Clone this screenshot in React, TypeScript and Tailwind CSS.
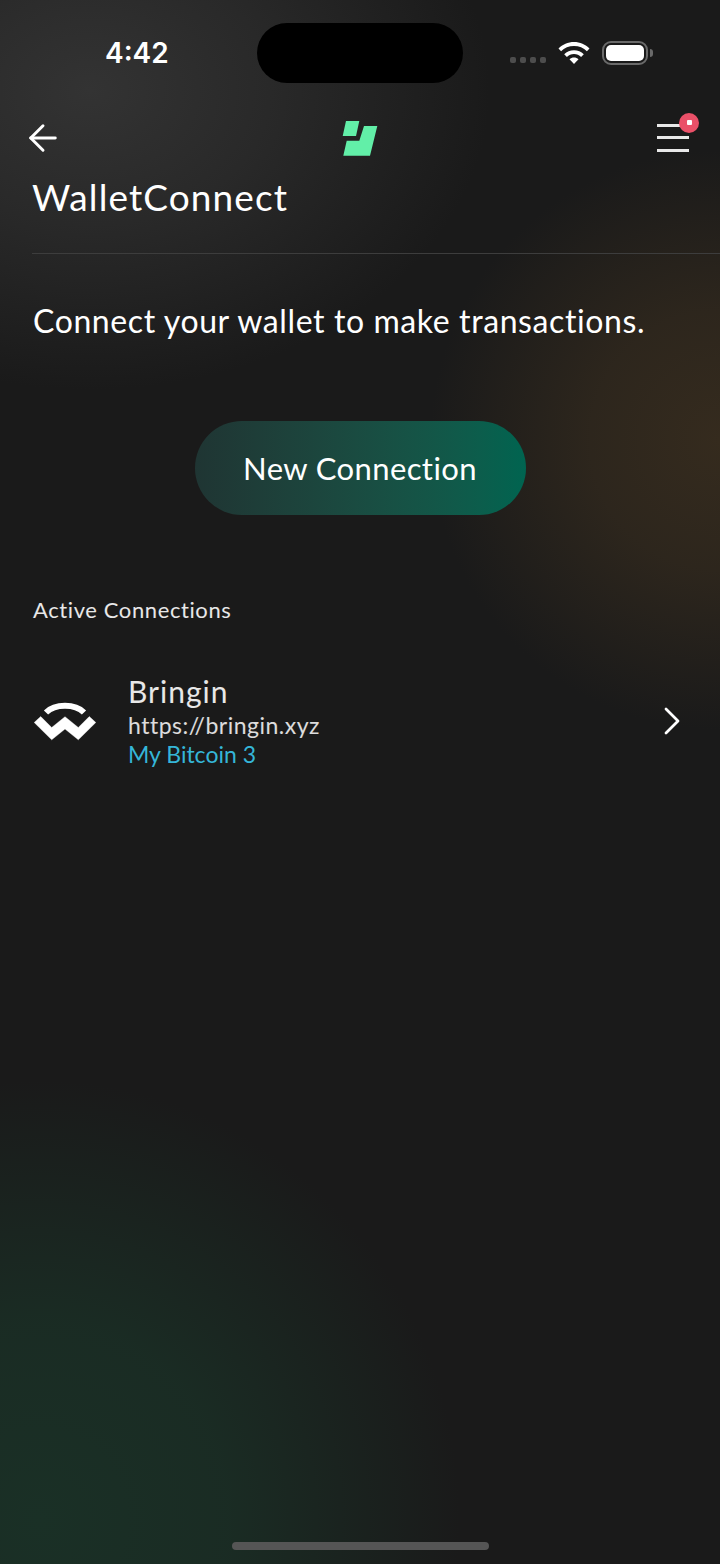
import { ArrowLeft, ChevronRight } from 'lucide-react';

const pageBg =
  'bg-[radial-gradient(ellipse_420px_440px_at_40px_1520px,#1a3026_0%,rgba(26,48,38,0.8)_45%,rgba(26,26,26,0)_100%),radial-gradient(ellipse_290px_290px_at_720px_440px,#352b1e_0%,rgba(53,43,30,0.7)_45%,rgba(26,26,26,0)_100%),radial-gradient(ellipse_400px_300px_at_90px_90px,#333333_0%,rgba(51,51,51,0.6)_45%,rgba(26,26,26,0)_100%)]';

function WifiIcon() {
  return (
    <svg width="32" height="24" viewBox="0 0 32 24" fill="white">
      <path d="M0.5 7.500C4.500 3.400 10 1 16 1s11.500 2.400 15.500 6.500l-2.600 2.700C25.600 6.900 21 5 16 5S6.400 6.900 3.100 10.200z" />
      <path d="M6.200 13.200C8.800 10.700 12.200 9.200 16 9.200s7.200 1.500 9.800 4l-2.700 2.700C21.300 14.100 18.800 13 16 13s-5.300 1.100-7.100 2.900z" />
      <path d="M11.500 18.300C12.700 17.200 14.300 16.600 16 16.600s3.300 0.600 4.500 1.700L16 23z" />
    </svg>
  );
}

function Battery() {
  return (
    <div className="flex items-center gap-[2px]">
      <div className="w-[46px] h-[24px] rounded-[9px] border-[2px] border-[#6a6a6a] p-[2px]">
        <div className="w-full h-full rounded-[5px] bg-white" />
      </div>
      <div className="w-[3px] h-[8px] rounded-r-full bg-[#6a6a6a]" />
    </div>
  );
}

function Logo() {
  return (
    <svg width="36" height="36" viewBox="0 0 36 36" fill="#62efa8">
      <polygon points="4,1 17.300,1 14,16 0.700,16" />
      <polygon points="22,6 35.300,6 28,35.700 1.300,35.700 4.700,20.700 17.300,20.700" />
    </svg>
  );
}

function WcIcon() {
  return (
    <svg width="64" height="40" viewBox="0 0 64 40">
      <path d="M13 11.500C22 2.500 42 2.500 51 11.500" fill="none" stroke="white" strokeWidth="6" />
      <polygon
        points="1.200,21.500 7.700,15.500 18.700,26.500 32,15.700 45.300,26.500 56.300,15.500 62.800,21.500 45.300,38.800 32,28 18.700,38.800"
        fill="white"
        stroke="white"
        strokeWidth="0.4"
        strokeLinejoin="round"
      />
    </svg>
  );
}

export default function App() {
  return (
    <div
      className={`relative w-[720px] h-[1564px] overflow-hidden bg-[#1a1a1a] text-white font-['Lato',sans-serif] ${pageBg}`}
    >
      {/* notch */}
      <div className="absolute left-[257px] top-[23px] w-[206px] h-[60px] rounded-[30px] bg-black" />

      <div className="flex items-center justify-between h-[105px] pl-[105px] pr-[67px]">
        <span className="text-[28px] font-semibold font-['Inter',sans-serif] leading-none">4:42</span>
        <div className="flex items-center">
          <div className="flex gap-[4px] mr-[12px] mt-[14px]">
            <span className="w-[6px] h-[6px] rounded-[2px] bg-[#4d4d4d]" />
            <span className="w-[6px] h-[6px] rounded-[2px] bg-[#4d4d4d]" />
            <span className="w-[6px] h-[6px] rounded-[2px] bg-[#4d4d4d]" />
            <span className="w-[6px] h-[6px] rounded-[2px] bg-[#4d4d4d]" />
          </div>
          <WifiIcon />
          <div className="ml-[12px]">
            <Battery />
          </div>
        </div>
      </div>

      <div className="flex items-center h-[65px] px-[22px]">
        <div className="flex-1">
          <ArrowLeft size={42} strokeWidth={1.7} />
        </div>
        <Logo />
        <div className="flex-1 flex justify-end">
          <div className="relative mr-[9px] w-[32px] h-[28px] flex flex-col justify-between">
            <span className="h-[3px] bg-white/90" />
            <span className="h-[3px] bg-white/90" />
            <span className="h-[3px] bg-white/90" />
            <span className="absolute -top-[11px] -right-[10px] w-[20px] h-[20px] rounded-full bg-[#ea5068] flex items-center justify-center">
              <span className="w-[5px] h-[5px] bg-white rounded-[1px]" />
            </span>
          </div>
        </div>
      </div>

      <div className="pl-[32px]">
        <h1 className="text-[37px] leading-[54px] font-normal tracking-[1.1px]">WalletConnect</h1>
        <div className="mt-[29px] h-[1px] bg-[#3d3d3d]" />
      </div>

      <p className="mt-[47px] pl-[33px] text-[32px] leading-[40px] tracking-[0.6px]">
        Connect your wallet to make transactions.
      </p>

      <div className="mt-[80px] flex justify-center">
        <button className="w-[331px] h-[94px] rounded-[47px] bg-gradient-to-r from-[#1f3533] to-[#006450] text-[31px] tracking-[0.4px]">
          New Connection
        </button>
      </div>

      <p className="mt-[80px] pl-[33px] text-[22px] leading-[30px] tracking-[0.6px] text-white/90">
        Active Connections
      </p>

      <div className="mt-[48px] flex items-center pl-[33px] pr-[24px]">
        <WcIcon />
        <div className="ml-[31px] flex-1 flex flex-col">
          <span className="text-[30px] leading-[37px] tracking-[1px] text-white/90">Bringin</span>
          <span className="text-[23px] leading-[31px] tracking-[0.5px] text-white/85">https://bringin.xyz</span>
          <span className="text-[23px] leading-[27px] text-[#35b6d8]">My Bitcoin 3</span>
        </div>
        <ChevronRight size={48} strokeWidth={1.4} />
      </div>

      {/* home indicator */}
      <div className="absolute left-[232px] bottom-[14px] w-[257px] h-[8px] rounded-full bg-[#555555]" />
    </div>
  );
}
